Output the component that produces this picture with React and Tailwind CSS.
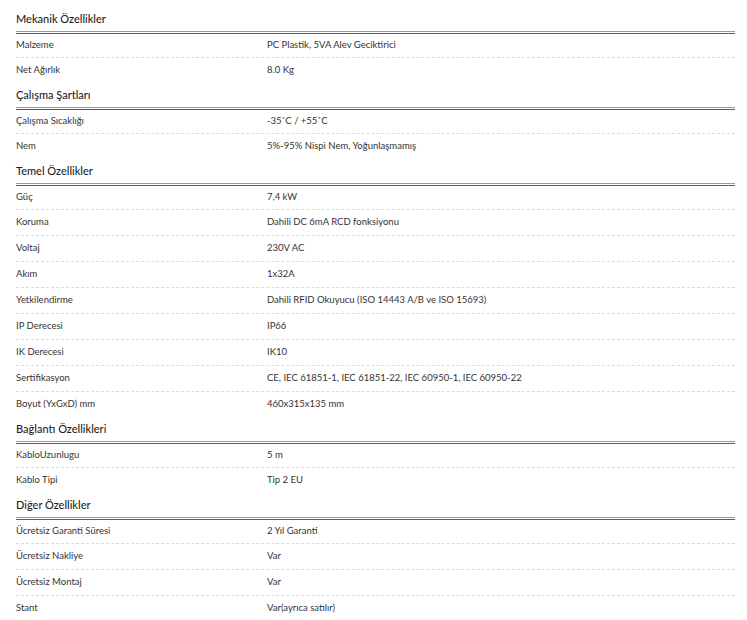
const sections = [
  {
    title: "Mekanik Özellikler",
    rows: [
      ["Malzeme", "PC Plastik, 5VA Alev Geciktirici"],
      ["Net Ağırlık", "8.0 Kg"],
    ],
  },
  {
    title: "Çalışma Şartları",
    rows: [
      ["Çalışma Sıcaklığı", "-35˚C / +55˚C"],
      ["Nem", "5%-95% Nispi Nem, Yoğunlaşmamış"],
    ],
  },
  {
    title: "Temel Özellikler",
    rows: [
      ["Güç", "7,4 kW"],
      ["Koruma", "Dahili DC 6mA RCD fonksiyonu"],
      ["Voltaj", "230V AC"],
      ["Akım", "1x32A"],
      ["Yetkilendirme", "Dahili RFID Okuyucu (ISO 14443 A/B ve ISO 15693)"],
      ["IP Derecesi", "IP66"],
      ["IK Derecesi", "IK10"],
      ["Sertifikasyon", "CE, IEC 61851-1, IEC 61851-22, IEC 60950-1, IEC 60950-22"],
      ["Boyut (YxGxD) mm", "460x315x135 mm"],
    ],
  },
  {
    title: "Bağlantı Özellikleri",
    rows: [
      ["KabloUzunlugu", "5 m"],
      ["Kablo Tipi", "Tip 2 EU"],
    ],
  },
  {
    title: "Diğer Özellikler",
    rows: [
      ["Ücretsiz Garanti Süresi", "2 Yıl Garanti"],
      ["Ücretsiz Nakliye", "Var"],
      ["Ücretsiz Montaj", "Var"],
      ["Stant", "Var(ayrıca satılır)"],
    ],
  },
];

function Section({ title, rows }) {
  return (
    <div>
      <h3 className="h-[23px] flex items-center text-[11px] font-medium text-[#1f1f1f]">{title}</h3>
      {/* gray + red double rule under the heading */}
      <div className="border-t border-[#9a9a9a] h-[2px]" />
      <div className="border-t border-[#d42a2a]" />
      {rows.map(([label, value], i) => (
        <div
          key={label}
          className={
            "flex items-center border-b border-dashed text-[9.5px] text-[#333] " +
            (i === 0 ? "h-[24px] " : "h-[26px] ") +
            (i === rows.length - 1 ? "border-transparent" : "border-[#dcdcdc]")
          }
        >
          <div className="w-[251px] shrink-0">{label}</div>
          <div>{value}</div>
        </div>
      ))}
    </div>
  );
}

export default function App() {
  return (
    <div
      className="bg-white w-[747px] h-[620px] overflow-hidden pt-[8px] pl-[16px] pr-[12px]"
      style={{ fontFamily: "Lato, 'Noto Sans', sans-serif" }}
    >
      {sections.map((s) => (
        <Section key={s.title} {...s} />
      ))}
    </div>
  );
}
